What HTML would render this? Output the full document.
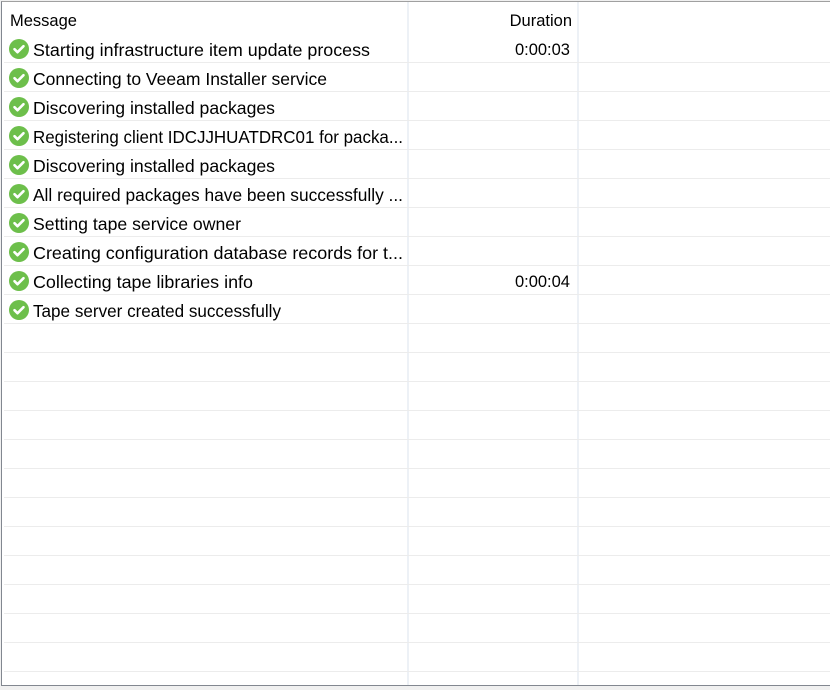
<!DOCTYPE html>
<html><head><style>
body{margin:0;width:830px;height:690px;background:#f0f0f0;overflow:hidden;font-family:"Liberation Sans",sans-serif;}
#box{position:absolute;left:1px;top:1px;width:829px;height:683px;border-left:1px solid #828790;border-top:1px solid #a0a0a0;border-bottom:1px solid #828790;background:#fff;overflow:hidden;}
.h{position:absolute;left:2px;right:0;height:1px;background:#ececec;}
.v{position:absolute;top:0;bottom:0;width:2px;background:#edf1f6;}
.t{position:absolute;font-size:17.5px;color:#000;white-space:nowrap;line-height:20px;}
.m{transform-origin:0 0;}
.ic{position:absolute;left:7px;width:20px;height:20px;}
</style></head><body>
<div id="box">
<div class="v" style="left:405px"></div>
<div class="v" style="left:575px"></div>
<div class="t" style="left:8px;top:9px;font-size:16.5px">Message</div>
<div class="t" style="left:470px;width:100px;text-align:right;top:9px;font-size:16.5px">Duration</div>
<div id="rows"></div>
</div>
<script>
var msgs=["Starting infrastructure item update process","Connecting to Veeam Installer service","Discovering installed packages","Registering client IDCJJHUATDRC01 for packa...","Discovering installed packages","All required packages have been successfully ...","Setting tape service owner","Creating configuration database records for t...","Collecting tape libraries info","Tape server created successfully"];
var ends=[370,327,275,403,275,403,241,403,253,281];
var dur={0:"0:00:03",8:"0:00:04"};
var h="";
for(var y=60;y<684;y+=29){h+='<div class="h" style="top:'+y+'px"></div>';}
msgs.forEach(function(m,i){var top=32+i*29;
h+='<svg class="ic" style="top:'+(top+5)+'px" viewBox="0 0 20 20"><circle cx="10" cy="10" r="10" fill="#6dbf4b"/><path d="M5.5 10.2l3 3 6-6" stroke="#fff" stroke-width="2.6" fill="none" stroke-linecap="round" stroke-linejoin="round"/></svg>';
h+='<div class="t m" data-e="'+ends[i]+'" style="left:31px;top:'+(top+6)+'px">'+m+'</div>';
if(dur[i])h+='<div class="t" style="left:470px;width:98px;text-align:right;top:'+(top+6)+'px;font-size:16.5px">'+dur[i]+'</div>';});
document.getElementById("rows").innerHTML=h;
var els=document.querySelectorAll('.m');
for(var k=0;k<els.length;k++){var e=els[k];var w=e.getBoundingClientRect().width;var tw=parseFloat(e.getAttribute('data-e'))-33;e.style.transform='scaleX('+(tw/w)+')';}
</script>
</body></html>
